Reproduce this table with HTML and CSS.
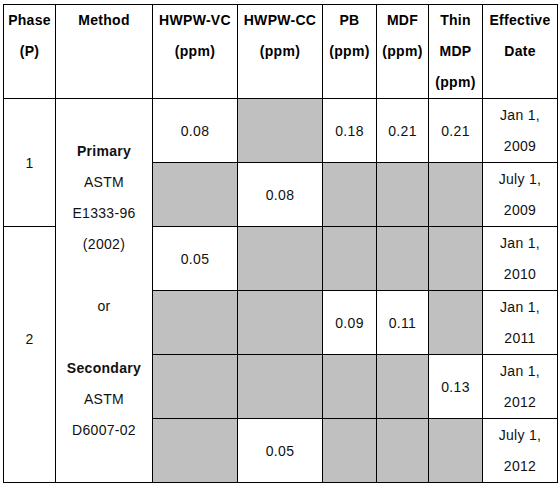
FILE: index.html
```html
<!DOCTYPE html>
<html lang="en">
<head>
  <meta charset="UTF-8">
  <title>Formaldehyde emission limits</title>
  <link rel="stylesheet" href="styles.css">
</head>
<body>

  <table class="limits">
    <colgroup>
      <col class="c-phase">
      <col class="c-method">
      <col class="c-wide">
      <col class="c-wide">
      <col class="c-narrow">
      <col class="c-narrow">
      <col class="c-narrow">
      <col class="c-date">
    </colgroup>
    <thead>
      <tr>
        <th>Phase<br>(P)</th>
        <th>Method</th>
        <th>HWPW-VC<br>(ppm)</th>
        <th>HWPW-CC<br>(ppm)</th>
        <th>PB<br>(ppm)</th>
        <th>MDF<br>(ppm)</th>
        <th>Thin<br>MDP<br>(ppm)</th>
        <th>Effective<br>Date</th>
      </tr>
    </thead>
    <tbody>
      <tr>
        <td rowspan="2">1</td>
        <td rowspan="6" class="method">
          <b>Primary</b><br>ASTM<br>E1333-96<br>(2002)<br><br>or<br><br><b>Secondary</b><br>ASTM<br>D6007-02
        </td>
        <td>0.08</td>
        <td class="na"></td>
        <td>0.18</td>
        <td>0.21</td>
        <td>0.21</td>
        <td>Jan 1,<br>2009</td>
      </tr>
      <tr>
        <td class="na"></td>
        <td>0.08</td>
        <td class="na"></td>
        <td class="na"></td>
        <td class="na"></td>
        <td>July 1,<br>2009</td>
      </tr>
      <tr>
        <td rowspan="4">2<br>&nbsp;</td>
        <td>0.05</td>
        <td class="na"></td>
        <td class="na"></td>
        <td class="na"></td>
        <td class="na"></td>
        <td>Jan 1,<br>2010</td>
      </tr>
      <tr>
        <td class="na"></td>
        <td class="na"></td>
        <td>0.09</td>
        <td>0.11</td>
        <td class="na"></td>
        <td>Jan 1,<br>2011</td>
      </tr>
      <tr>
        <td class="na"></td>
        <td class="na"></td>
        <td class="na"></td>
        <td class="na"></td>
        <td>0.13</td>
        <td>Jan 1,<br>2012</td>
      </tr>
      <tr>
        <td class="na"></td>
        <td>0.05</td>
        <td class="na"></td>
        <td class="na"></td>
        <td class="na"></td>
        <td>July 1,<br>2012</td>
      </tr>
    </tbody>
  </table>

</body>
</html>
```

FILE: styles.css
```css
* {
  box-sizing: border-box;
}

body {
  margin: 0;
  padding: 4px 0 0 3px;
  background: #fff;
  font-family: "Liberation Sans", Arial, sans-serif;
  font-size: 14px;
  color: #000;
}

.limits {
  border-collapse: collapse;
  table-layout: fixed;
  width: 555px;
}

.c-phase { width: 52px; }
.c-method { width: 97px; }
.c-wide { width: 85px; }
.c-narrow { width: 54px; }
.c-date { width: 75px; }

.limits col:nth-child(6) { width: 52px; }

.limits th,
.limits td {
  border: 1px solid #000;
  text-align: center;
  line-height: 31px;
  padding: 0 1px;
  white-space: nowrap;
  letter-spacing: 0.3px;
}

.limits th {
  vertical-align: top;
  font-weight: bold;
}

.limits td {
  vertical-align: middle;
  padding-top: 1px;
  color: #111;
}

.limits td.method {
  padding-top: 0;
}

.limits .na {
  background: #c0c0c0;
}
```
